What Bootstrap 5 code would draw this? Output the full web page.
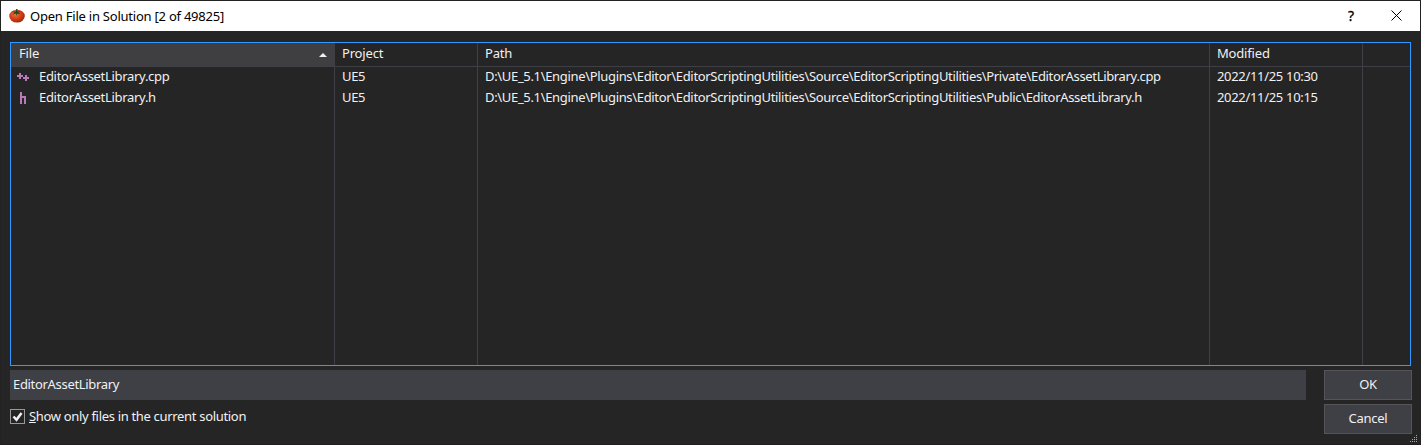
<!DOCTYPE html>
<html lang="en">
<head>
<meta charset="utf-8">
<title>Open File in Solution</title>
<link href="https://cdn.jsdelivr.net/npm/bootstrap@5.3.0/dist/css/bootstrap.min.css" rel="stylesheet">
<style>
body{width:1421px;height:445px;overflow:hidden;background:#252526;color:#f1f1f1;font:13px/21px "Noto Sans","Open Sans",sans-serif;letter-spacing:-.32px;border:1px solid #222;border-bottom:1px solid #231d20}
.titlebar{height:30px;background:#fff;color:#000;padding-left:8px}
.titlebar .caption{margin-left:5px;letter-spacing:-.23px;line-height:20px;padding-bottom:1px}
.help{width:43px;font-size:14px;padding-bottom:2px;-webkit-text-stroke:.3px #000}
.filelist{height:324px;width:1401px;margin:11px 0 0 9px;border:1px solid #3399ff;grid-template-columns:324px 143px 732px 153px 1fr}
.filecol{border-right:1px solid #3f3f46;white-space:nowrap}
.filecol:last-child{border-right:0}
.colhead{height:24px;line-height:20px;padding-left:7px;border-bottom:1px solid #3f3f46;letter-spacing:-.18px}
.colhead.sorted{background:#3f3f41;padding:0 7px 0 8px}
.sorted svg{margin-top:10px}
.cellrow{height:21px;line-height:18px;padding-left:7px}
.cellrow.filename{padding-left:6px}
.filename span{margin-left:9px}
.filename svg{margin-top:3px}
.query{width:1296px;height:30px;background:#3f3f46;padding:0 3px;line-height:28px}
.dlgbtn{width:88px;height:30px;background:#3f3f46;border:1px solid #555558;border-radius:0;color:#f1f1f1;font:inherit;letter-spacing:-.25px;padding:0 0 2px}
.actions{padding:4px 8px 0 9px}
.only{margin-top:6px}
.tick{width:15px;height:15px;border:1px solid #999;margin-right:4px}
.fit-name{letter-spacing:-.3px}
.fit-path{letter-spacing:-.33px}
.grip{position:absolute;right:2px;bottom:1px}
</style>
</head>
<body class="position-relative">
<header class="titlebar d-flex align-items-center">
  <svg width="16" height="14" viewBox="0 0 16 14"><defs><radialGradient id="tom" cx=".4" cy=".35" r=".7"><stop offset="0" stop-color="#ee7440"/><stop offset=".6" stop-color="#cf3a12"/><stop offset="1" stop-color="#98240a"/></radialGradient></defs><ellipse cx="8" cy="7.1" rx="7.8" ry="6.4" fill="url(#tom)"/><path d="M7.2 0h1.300l-.2 2.400 3.700-.2-2.400 1.400 2.100 1.700-3.200-.8-.8 2.300-.9-2.200-3.200 1.100 1.800-1.900-2.700-1.200 4 .1z" fill="#26491b"/></svg>
  <span class="caption">Open File in Solution [2 of 49825]</span>
  <span class="help ms-auto">?</span>
  <svg width="11" height="11" viewBox="0 0 11 11" style="margin:0 18px 1px 0"><path d="M.5.5l10 10M10.500.5l-10 10" stroke="#000" fill="none"/></svg>
</header>
<main>
  <section class="filelist d-grid">
    <div class="filecol">
      <div class="colhead sorted d-flex justify-content-between"><span>File</span><svg width="8" height="4"><path d="M4 0l4 4H0z" fill="#f1f1f1"/></svg></div>
      <div class="cellrow filename d-flex"><svg width="13" height="13" viewBox="0 0 13 13"><path d="M0 6h6M3 3v6M6 8h6M9 5v6" stroke="#b87bb8" stroke-width="2" fill="none"/></svg><span class="fit-name">EditorAssetLibrary.cpp</span></div>
      <div class="cellrow filename d-flex"><svg width="13" height="13" viewBox="0 0 13 13"><path d="M4 1v12M4 6h4v7" stroke="#b87bb8" stroke-width="2" fill="none"/></svg><span class="fit-name">EditorAssetLibrary.h</span></div>
    </div>
    <div class="filecol"><div class="colhead">Project</div><div class="cellrow">UE5</div><div class="cellrow">UE5</div></div>
    <div class="filecol"><div class="colhead">Path</div>
      <div class="cellrow fit-path">D:\UE_5.1\Engine\Plugins\Editor\EditorScriptingUtilities\Source\EditorScriptingUtilities\Private\EditorAssetLibrary.cpp</div>
      <div class="cellrow fit-path">D:\UE_5.1\Engine\Plugins\Editor\EditorScriptingUtilities\Source\EditorScriptingUtilities\Public\EditorAssetLibrary.h</div></div>
    <div class="filecol"><div class="colhead">Modified</div><div class="cellrow">2022/11/25 10:30</div><div class="cellrow">2022/11/25 10:15</div></div>
    <div class="filecol"><div class="colhead"></div></div>
  </section>
  <div class="actions d-flex justify-content-between">
    <div>
      <div class="query">EditorAssetLibrary</div>
      <label class="only d-flex align-items-center"><svg class="tick" viewBox="0 0 13 13"><path d="M2.500 6.500L5.500 9.800 10.500 3" stroke="#f1f1f1" stroke-width="2.500" fill="none"/></svg><span><u>S</u>how only files in the current solution</span></label>
    </div>
    <div class="d-flex flex-column gap-1"><button class="btn dlgbtn">OK</button><button class="btn dlgbtn">Cancel</button></div>
  </div>
</main>
<svg class="grip" width="8" height="8" fill="#aaa"><path d="M6 0h1v1H6zM4 2h1v1H4zM6 2h1v1H6zM2 4h1v1H2zM4 4h1v1H4zM6 4h1v1H6zM0 6h1v1H0zM2 6h1v1H2zM4 6h1v1H4zM6 6h1v1H6z"/></svg>
<script src="https://cdn.jsdelivr.net/npm/bootstrap@5.3.0/dist/js/bootstrap.bundle.min.js"></script>
</body>
</html>
